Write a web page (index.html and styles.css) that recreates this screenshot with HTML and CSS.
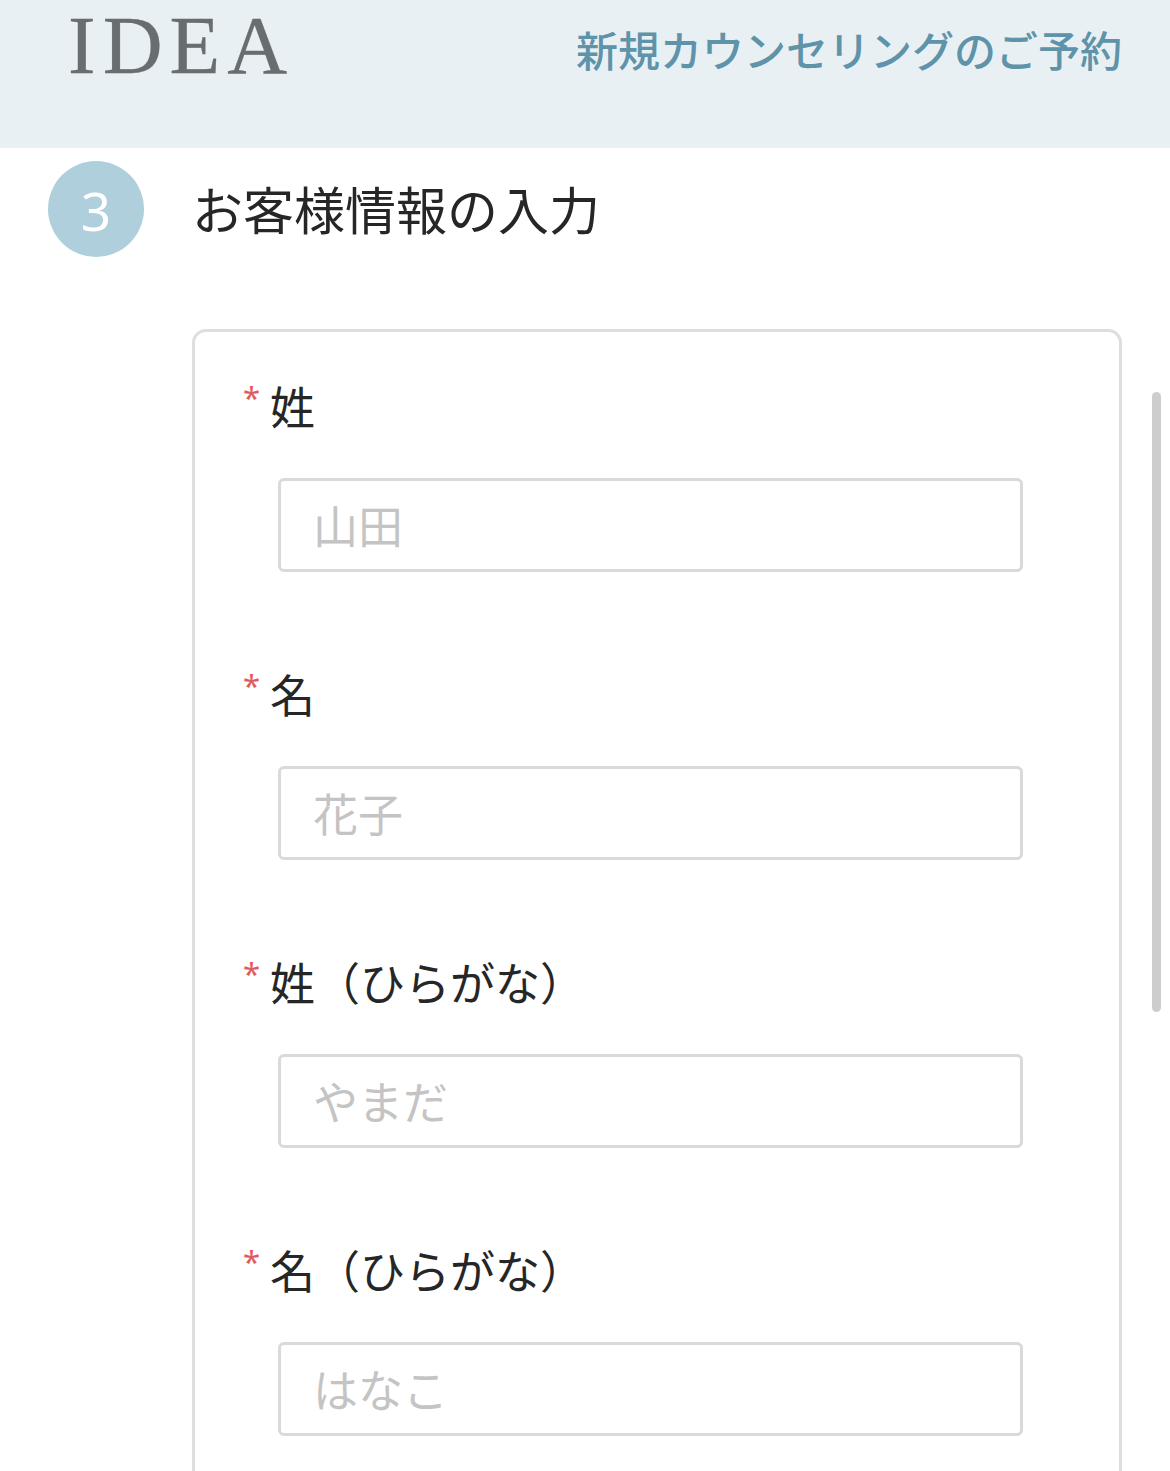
FILE: index.html
```html
<!DOCTYPE html>
<html lang="ja">
<head>
<meta charset="utf-8">
<title>新規カウンセリングのご予約</title>
<link rel="stylesheet" href="styles.css">
</head>
<body>
<header class="header">
  <div class="logo">IDEA</div>
  <div class="header-title">新規カウンセリングのご予約</div>
</header>
<main class="main">
  <div class="step">
    <div class="step-num">3</div>
    <h2 class="step-title">お客様情報の入力</h2>
  </div>
  <form class="card">
    <div class="field">
      <label class="label"><span class="req">*</span>姓</label>
      <div class="input"><span class="ph">山田</span></div>
    </div>
    <div class="field">
      <label class="label"><span class="req">*</span>名</label>
      <div class="input"><span class="ph">花子</span></div>
    </div>
    <div class="field">
      <label class="label"><span class="req">*</span>姓（ひらがな）</label>
      <div class="input"><span class="ph">やまだ</span></div>
    </div>
    <div class="field">
      <label class="label"><span class="req">*</span>名（ひらがな）</label>
      <div class="input"><span class="ph">はなこ</span></div>
    </div>
  </form>
</main>
<div class="scrollbar"></div>
</body>
</html>
```
FILE: styles.css
```css
* { box-sizing: border-box; }
html, body { margin: 0; height: 1471px; overflow: hidden; background: #fff; }
body { font-family: "Noto Sans CJK JP", "Noto Sans", sans-serif; color: #262626; position: relative; display: flex; flex-direction: column; }
.header { flex: none; height: 148px; background: #e8f0f4; padding: 0 48px 0 68px; display: flex; justify-content: space-between; align-items: flex-start; }
.logo { font-family: "Liberation Serif", serif; font-size: 83px; line-height: 90px; letter-spacing: 7px; color: #686d6f; -webkit-text-stroke: 0.3px #686d6f; }
.header-title { font-size: 42px; line-height: 60px; margin-top: 19px; color: #5f93a9; white-space: nowrap; font-weight: 500; }
.main { flex: 1; min-height: 0; overflow: hidden; padding: 13px 48px 0; }
.step { display: flex; align-items: center; gap: 50px; height: 96px; }
.step-num { width: 96px; height: 96px; border-radius: 50%; background: #afcfdc; color: #fff; font-family: "Noto Sans", sans-serif; font-size: 53px; line-height: 100px; text-align: center; }
.step-title { margin: -3px 0 0 -2px; font-size: 51px; font-weight: 400; line-height: 72px; }
.card { margin: 72px 0 0 144px; width: 930px; height: 1400px; border: 3px solid #dedede; border-radius: 14px; padding: 42px 0 0 48px; }
.field { height: 288px; }
.label { display: flex; align-items: flex-start; height: 64px; font-size: 45px; line-height: 64px; white-space: nowrap; }
.req { width: 27px; color: #e05a5a; font-size: 31px; line-height: 46px; font-family: "Noto Sans", sans-serif; }
.input { margin: 40px 0 0 35px; width: 745px; height: 94px; border: 3px solid #d9d9d9; border-radius: 6px; padding-left: 32px; display: flex; align-items: center; font-size: 45px; }
.ph { color: #c4c4c4; line-height: 60px; }
.scrollbar { position: absolute; left: 1152px; top: 392px; width: 9px; height: 620px; border-radius: 5px; background: #cdcdcd; }
```
